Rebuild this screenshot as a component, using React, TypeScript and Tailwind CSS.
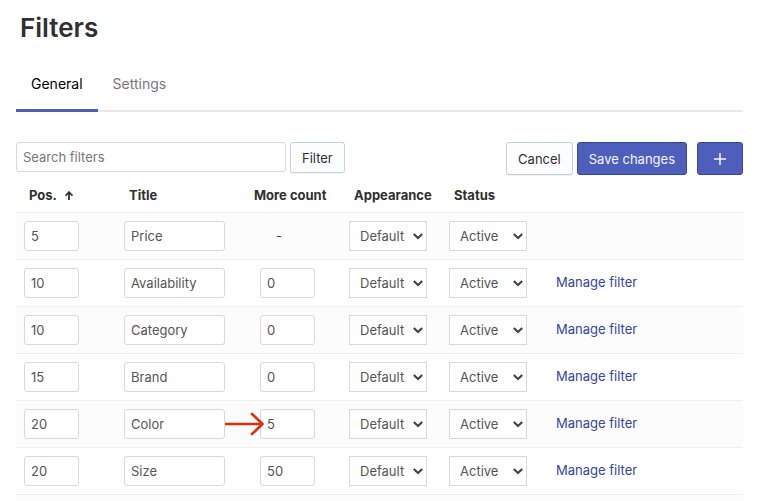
import React from "react";

type Filter = { pos: string; title: string; more: string | null; marked?: boolean };

const filters: Filter[] = [
  { pos: "5", title: "Price", more: null },
  { pos: "10", title: "Availability", more: "0" },
  { pos: "10", title: "Category", more: "0" },
  { pos: "15", title: "Brand", more: "0" },
  { pos: "20", title: "Color", more: "5", marked: true },
  { pos: "20", title: "Size", more: "50" },
];

const fieldClass =
  "block h-[30px] rounded-[3px] border border-[#d9d9d9] bg-white px-1.5 text-[13px] text-[#555] placeholder:text-[#777] outline-none focus:border-[#4d5fbb]";

function Select({ label, options }: { label: string; options: string[] }) {
  return (
    <div className="relative w-[78px]">
      <select
        aria-label={label}
        className="block h-[30px] w-full appearance-none border border-[#d9d9d9] bg-white pl-2.5 text-[13px] text-[#555] outline-none"
      >
        {options.map((option) => (
          <option key={option}>{option}</option>
        ))}
      </select>
      <svg
        className="pointer-events-none absolute top-3 right-1 h-[7px] w-[10px]"
        viewBox="0 0 10 7"
        fill="none"
        stroke="#444"
        strokeWidth="2.2"
        aria-hidden="true"
      >
        <path d="M0.8 1l4.200 4 4.200-4" />
      </svg>
    </div>
  );
}

function MarkerArrow() {
  return (
    <svg
      className="pointer-events-none absolute top-[-1px] -left-9 h-[30px] w-10"
      viewBox="0 0 40 30"
      fill="none"
      stroke="#dc2f12"
      strokeWidth="2.6"
      aria-hidden="true"
    >
      <path d="M1 16H38" />
      <path d="M28 6L38.5 16L28 26" strokeLinecap="round" strokeLinejoin="round" />
    </svg>
  );
}

function FilterRow({ filter }: { filter: Filter }) {
  return (
    <tr className="h-[47px] border-t border-[#efefef] odd:bg-[#fcfcfc]">
      <td className="px-2">
        <input aria-label="Position" defaultValue={filter.pos} className={`${fieldClass} w-[55px]`} />
      </td>
      <td className="px-2">
        <input aria-label="Title" defaultValue={filter.title} className={`${fieldClass} w-[101px]`} />
      </td>
      <td className="px-[19px]">
        {filter.more === null ? (
          <span className="block pl-4">-</span>
        ) : (
          <div className="relative">
            <input aria-label="More count" defaultValue={filter.more} className={`${fieldClass} w-[55px]`} />
            {filter.marked && <MarkerArrow />}
          </div>
        )}
      </td>
      <td className="px-2">
        <Select label="Appearance" options={["Default", "Custom"]} />
      </td>
      <td className="px-2">
        <Select label="Status" options={["Active", "Disabled"]} />
      </td>
      <td className="px-[15px] pb-0.5">
        {filter.more !== null && (
          <a href="#manage" className="text-[#3445a2] hover:underline">
            Manage filter
          </a>
        )}
      </td>
    </tr>
  );
}

export default function App() {
  const primary =
    "h-[33px] rounded-[3px] border border-[#3346a6] bg-[#4d5fbb] text-[#f4f5fc] whitespace-nowrap";
  const secondary =
    "rounded-[3px] border border-[#c4d1de] bg-[#fcfdff] px-[11px] text-[#303030] shadow-[0_1px_0_rgba(22,29,37,0.06)]";

  return (
    <main className="bg-white pr-[15px] pl-4 font-['Inter',sans-serif] text-[13px] leading-5 text-[#444]">
      <h1 className="px-1 pt-2.5 text-[26px] leading-9 font-semibold text-[#303030]">Filters</h1>

      <nav className="mt-[18px] flex h-12 border-b-2 border-[#e8e8e8] text-sm leading-5">
        <a href="#general" aria-current="page" className="-mb-0.5 h-12 border-b-3 border-[#4d5fbb] px-[15px] pt-2.5 text-black">
          General
        </a>
        <a href="#settings" className="px-[15px] pt-2.5 text-[#777]">
          Settings
        </a>
      </nav>

      <div className="mt-[30px] flex items-start">
        <form className="flex items-start gap-1" onSubmit={(event) => event.preventDefault()}>
          <input type="search" aria-label="Search filters" placeholder="Search filters" className={`${fieldClass} w-[270px]`} />
          <button className={`${secondary} h-[31px]`}>Filter</button>
        </form>
        <div className="ml-auto flex">
          <button className={`${secondary} h-[33px]`}>Cancel</button>
          <button className={`${primary} ml-1 px-[11px]`}>Save changes</button>
          <button aria-label="Add filter" className={`${primary} ml-2.5 flex w-[46px] items-center justify-center`}>
            <svg className="h-3 w-3" viewBox="0 0 12 12" stroke="currentColor" strokeWidth="1.5" aria-hidden="true">
              <path d="M6 0v12M0 6h12" />
            </svg>
          </button>
        </div>
      </div>

      <table className="mt-1 w-full table-fixed border-collapse text-left">
        <colgroup>
          <col className="w-[100px]" />
          <col className="w-[125px]" />
          <col className="w-[100px]" />
          <col className="w-[100px]" />
          <col className="w-[100px]" />
          <col />
        </colgroup>
        <thead>
          <tr className="h-[33px] whitespace-nowrap text-[#303030]">
            <th className="pl-[13px] font-bold">
              <span className="flex items-center gap-2">
                Pos.
                <svg className="h-[9px] w-2" viewBox="0 0 8 9" fill="none" stroke="currentColor" strokeWidth="1.8" aria-label="Sorted ascending">
                  <path d="M4 9V1M0.5 4.700L4 1.200L7.500 4.700" />
                </svg>
              </span>
            </th>
            <th className="pl-[13px] font-bold">Title</th>
            <th className="pl-[13px] font-bold">More count</th>
            <th className="pl-[13px] font-bold">Appearance</th>
            <th className="pl-[13px] font-bold">Status</th>
            <th aria-label="Actions" />
          </tr>
        </thead>
        <tbody>
          {filters.map((filter) => (
            <FilterRow key={filter.title} filter={filter} />
          ))}
          <tr className="h-[7px] border-t border-[#efefef] bg-[#fcfcfc]">
            <td colSpan={6} />
          </tr>
        </tbody>
      </table>
    </main>
  );
}
